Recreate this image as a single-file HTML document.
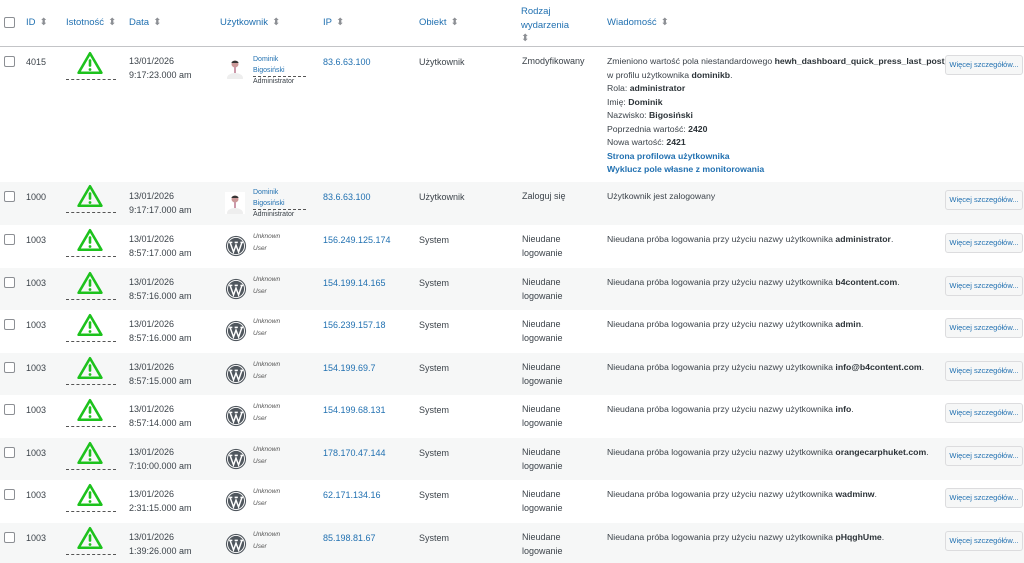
<!DOCTYPE html>
<html><head><meta charset="utf-8"><style>
*{box-sizing:border-box;margin:0;padding:0}
body{width:1024px;height:563px;overflow:hidden;background:#fff;font-family:"Liberation Sans",sans-serif;font-size:9px;color:#3c434a;position:relative}
.h{position:absolute;top:0;left:0;width:1024px;height:47px;border-bottom:1px solid #c3c4c7}
.h span{position:absolute;color:#2271b1;font-size:9.5px;top:17px}
.h .s{color:#8c8f94;font-size:10px;margin-left:4px;font-style:normal}
.r{position:absolute;left:0;width:1024px}
.g{background:#f6f7f7}
.r>*{position:absolute}
.cb{left:4px;width:11px;height:11px;border:1px solid #8c8f94;border-radius:2px;background:#fff}
.id{left:26px}
.warn{left:66px;width:50px;border-bottom:1px dashed #555;height:28px}
.warn svg{position:absolute;left:11px;top:-1px}
.dt{left:129px;line-height:13.5px}
.av{left:225px;width:20px;height:22px}
.un{left:253px;font-size:7px;line-height:10.5px;color:#2271b1}
.un .l{border-bottom:1px dashed #555;width:53px}
.un .a{color:#3c434a}
.uu{left:253px;font-size:6.5px;line-height:12px;font-style:italic;color:#555}
.ip{left:323px;color:#2271b1}
.ob{left:419px}
.ev{left:522px;line-height:13.5px}
.msg{left:607px;line-height:13.5px;width:338px;font-size:8.7px}
.msg b{color:#2c3338}
.msg a{color:#2271b1;font-weight:bold;text-decoration:none;display:block}
.btn{left:945px;width:78px;height:20px;border:1px solid #dcdcde;background:#f6f7f7;border-radius:3px;color:#2271b1;font-size:7.5px;text-align:center;line-height:18px}
</style></head><body>
<div class="h">
<div style="position:absolute;left:4px;top:17px;width:11px;height:11px;border:1px solid #8c8f94;border-radius:2px"></div>
<span style="left:26px">ID<i class="s">⬍</i></span>
<span style="left:66px">Istotność<i class="s">⬍</i></span>
<span style="left:129px">Data<i class="s">⬍</i></span>
<span style="left:220px">Użytkownik<i class="s">⬍</i></span>
<span style="left:323px">IP<i class="s">⬍</i></span>
<span style="left:419px">Obiekt<i class="s">⬍</i></span>
<span style="left:521px;top:5px;line-height:13.5px">Rodzaj<br>wydarzenia<br><i class="s" style="margin:0">⬍</i></span>
<span style="left:607px">Wiadomość<i class="s">⬍</i></span>
</div>
<svg width="0" height="0" style="position:absolute"><defs>
<symbol id="w" viewBox="0 0 24 22"><path d="M12 2 L22.5 20 H1.5 Z" fill="none" stroke="#1dc21d" stroke-width="2.4" stroke-linejoin="round"/><rect x="10.8" y="7.5" width="2.4" height="7" rx="1" fill="#1dc21d"/><circle cx="12" cy="17" r="1.3" fill="#1dc21d"/></symbol>
<symbol id="wp" viewBox="0 0 24 24"><circle cx="12" cy="12" r="11" fill="#50575e"/><circle cx="12" cy="12" r="9.3" fill="none" stroke="#fff" stroke-width="1"/><path d="M5.5 8 L9.3 18.5 L12 11 L14.8 18.5 L18.5 8 M4.5 8h3.5M10.5 8h3.5M16.8 8h3" stroke="#fff" stroke-width="1.6" fill="none"/></symbol>
<symbol id="p" viewBox="0 0 20 22"><rect width="20" height="22" fill="#fff"/><ellipse cx="10" cy="21" rx="8" ry="5" fill="#eee"/><circle cx="10" cy="7" r="3.5" fill="#c99"/><path d="M6.5 6c0-3 7-3 7 0" fill="#333"/><rect x="9" y="10" width="2" height="6" fill="#c9a"/></symbol>
</defs></svg>

<div class="r" style="top:47px;height:135px">
<div class="cb" style="top:9px"></div><div class="id" style="top:10px">4015</div>
<div class="warn" style="top:5px"><svg width="26" height="24"><use href="#w"/></svg></div>
<div class="dt" style="top:8px">13/01/2026<br>9:17:23.000 am</div>
<svg class="av" style="top:10px"><use href="#p"/></svg>
<div class="un" style="top:8px">Dominik<div class="l">Bigosiński</div><div class="a">Administrator</div></div>
<div class="ip" style="top:10px">83.6.63.100</div><div class="ob" style="top:10px">Użytkownik</div><div class="ev" style="top:8px">Zmodyfikowany</div>
<div class="msg" style="top:8px;white-space:nowrap">Zmieniono wartość pola niestandardowego <b>hewh_dashboard_quick_press_last_post_id</b><br>w profilu użytkownika <b>dominikb</b>.<br>Rola: <b>administrator</b><br>Imię: <b>Dominik</b><br>Nazwisko: <b>Bigosiński</b><br>Poprzednia wartość: <b>2420</b><br>Nowa wartość: <b>2421</b><a>Strona profilowa użytkownika</a><a>Wyklucz pole własne z monitorowania</a></div>
<div class="btn" style="top:8px">Więcej szczegółów...</div>
</div>

<div class="r g" style="top:182px;height:43px">
<div class="cb" style="top:9px"></div><div class="id" style="top:10px">1000</div>
<div class="warn" style="top:3px"><svg width="26" height="24"><use href="#w"/></svg></div>
<div class="dt" style="top:8px">13/01/2026<br>9:17:17.000 am</div>
<svg class="av" style="top:10px"><use href="#p"/></svg>
<div class="un" style="top:6px">Dominik<div class="l">Bigosiński</div><div class="a">Administrator</div></div>
<div class="ip" style="top:10px">83.6.63.100</div><div class="ob" style="top:10px">Użytkownik</div><div class="ev" style="top:8px">Zaloguj się</div>
<div class="msg" style="top:8px">Użytkownik jest zalogowany</div>
<div class="btn" style="top:8px">Więcej szczegółów...</div>
</div>

<div class="r" style="top:225px;height:43px">
<div class="cb" style="top:9px"></div><div class="id" style="top:10px">1003</div>
<div class="warn" style="top:4px"><svg width="26" height="24"><use href="#w"/></svg></div>
<div class="dt" style="top:8px">13/01/2026<br>8:57:17.000 am</div>
<svg class="av" style="top:10px;width:22px;height:22px"><use href="#wp"/></svg>
<div class="uu" style="top:6px">Unknown<br>User</div>
<div class="ip" style="top:10px">156.249.125.174</div><div class="ob" style="top:10px">System</div><div class="ev" style="top:8px">Nieudane<br>logowanie</div>
<div class="msg" style="top:8px">Nieudana próba logowania przy użyciu nazwy użytkownika <b>administrator</b>.</div>
<div class="btn" style="top:8px">Więcej szczegółów...</div>
</div>

<div class="r g" style="top:268px;height:42px">
<div class="cb" style="top:9px"></div><div class="id" style="top:10px">1003</div>
<div class="warn" style="top:4px"><svg width="26" height="24"><use href="#w"/></svg></div>
<div class="dt" style="top:8px">13/01/2026<br>8:57:16.000 am</div>
<svg class="av" style="top:10px;width:22px;height:22px"><use href="#wp"/></svg>
<div class="uu" style="top:6px">Unknown<br>User</div>
<div class="ip" style="top:10px">154.199.14.165</div><div class="ob" style="top:10px">System</div><div class="ev" style="top:8px">Nieudane<br>logowanie</div>
<div class="msg" style="top:8px">Nieudana próba logowania przy użyciu nazwy użytkownika <b>b4content.com</b>.</div>
<div class="btn" style="top:8px">Więcej szczegółów...</div>
</div>

<div class="r" style="top:310px;height:43px">
<div class="cb" style="top:9px"></div><div class="id" style="top:10px">1003</div>
<div class="warn" style="top:4px"><svg width="26" height="24"><use href="#w"/></svg></div>
<div class="dt" style="top:8px">13/01/2026<br>8:57:16.000 am</div>
<svg class="av" style="top:10px;width:22px;height:22px"><use href="#wp"/></svg>
<div class="uu" style="top:6px">Unknown<br>User</div>
<div class="ip" style="top:10px">156.239.157.18</div><div class="ob" style="top:10px">System</div><div class="ev" style="top:8px">Nieudane<br>logowanie</div>
<div class="msg" style="top:8px">Nieudana próba logowania przy użyciu nazwy użytkownika <b>admin</b>.</div>
<div class="btn" style="top:8px">Więcej szczegółów...</div>
</div>

<div class="r g" style="top:353px;height:42px">
<div class="cb" style="top:9px"></div><div class="id" style="top:10px">1003</div>
<div class="warn" style="top:4px"><svg width="26" height="24"><use href="#w"/></svg></div>
<div class="dt" style="top:8px">13/01/2026<br>8:57:15.000 am</div>
<svg class="av" style="top:10px;width:22px;height:22px"><use href="#wp"/></svg>
<div class="uu" style="top:6px">Unknown<br>User</div>
<div class="ip" style="top:10px">154.199.69.7</div><div class="ob" style="top:10px">System</div><div class="ev" style="top:8px">Nieudane<br>logowanie</div>
<div class="msg" style="top:8px">Nieudana próba logowania przy użyciu nazwy użytkownika <b>info@b4content.com</b>.</div>
<div class="btn" style="top:8px">Więcej szczegółów...</div>
</div>

<div class="r" style="top:395px;height:43px">
<div class="cb" style="top:9px"></div><div class="id" style="top:10px">1003</div>
<div class="warn" style="top:4px"><svg width="26" height="24"><use href="#w"/></svg></div>
<div class="dt" style="top:8px">13/01/2026<br>8:57:14.000 am</div>
<svg class="av" style="top:10px;width:22px;height:22px"><use href="#wp"/></svg>
<div class="uu" style="top:6px">Unknown<br>User</div>
<div class="ip" style="top:10px">154.199.68.131</div><div class="ob" style="top:10px">System</div><div class="ev" style="top:8px">Nieudane<br>logowanie</div>
<div class="msg" style="top:8px">Nieudana próba logowania przy użyciu nazwy użytkownika <b>info</b>.</div>
<div class="btn" style="top:8px">Więcej szczegółów...</div>
</div>

<div class="r g" style="top:438px;height:42px">
<div class="cb" style="top:9px"></div><div class="id" style="top:10px">1003</div>
<div class="warn" style="top:4px"><svg width="26" height="24"><use href="#w"/></svg></div>
<div class="dt" style="top:8px">13/01/2026<br>7:10:00.000 am</div>
<svg class="av" style="top:10px;width:22px;height:22px"><use href="#wp"/></svg>
<div class="uu" style="top:6px">Unknown<br>User</div>
<div class="ip" style="top:10px">178.170.47.144</div><div class="ob" style="top:10px">System</div><div class="ev" style="top:8px">Nieudane<br>logowanie</div>
<div class="msg" style="top:8px">Nieudana próba logowania przy użyciu nazwy użytkownika <b>orangecarphuket.com</b>.</div>
<div class="btn" style="top:8px">Więcej szczegółów...</div>
</div>

<div class="r" style="top:480px;height:43px">
<div class="cb" style="top:9px"></div><div class="id" style="top:10px">1003</div>
<div class="warn" style="top:4px"><svg width="26" height="24"><use href="#w"/></svg></div>
<div class="dt" style="top:8px">13/01/2026<br>2:31:15.000 am</div>
<svg class="av" style="top:10px;width:22px;height:22px"><use href="#wp"/></svg>
<div class="uu" style="top:6px">Unknown<br>User</div>
<div class="ip" style="top:10px">62.171.134.16</div><div class="ob" style="top:10px">System</div><div class="ev" style="top:8px">Nieudane<br>logowanie</div>
<div class="msg" style="top:8px">Nieudana próba logowania przy użyciu nazwy użytkownika <b>wadminw</b>.</div>
<div class="btn" style="top:8px">Więcej szczegółów...</div>
</div>

<div class="r g" style="top:523px;height:40px">
<div class="cb" style="top:9px"></div><div class="id" style="top:10px">1003</div>
<div class="warn" style="top:4px"><svg width="26" height="24"><use href="#w"/></svg></div>
<div class="dt" style="top:8px">13/01/2026<br>1:39:26.000 am</div>
<svg class="av" style="top:10px;width:22px;height:22px"><use href="#wp"/></svg>
<div class="uu" style="top:6px">Unknown<br>User</div>
<div class="ip" style="top:10px">85.198.81.67</div><div class="ob" style="top:10px">System</div><div class="ev" style="top:8px">Nieudane<br>logowanie</div>
<div class="msg" style="top:8px">Nieudana próba logowania przy użyciu nazwy użytkownika <b>pHqghUme</b>.</div>
<div class="btn" style="top:8px">Więcej szczegółów...</div>
</div>
</body></html>
